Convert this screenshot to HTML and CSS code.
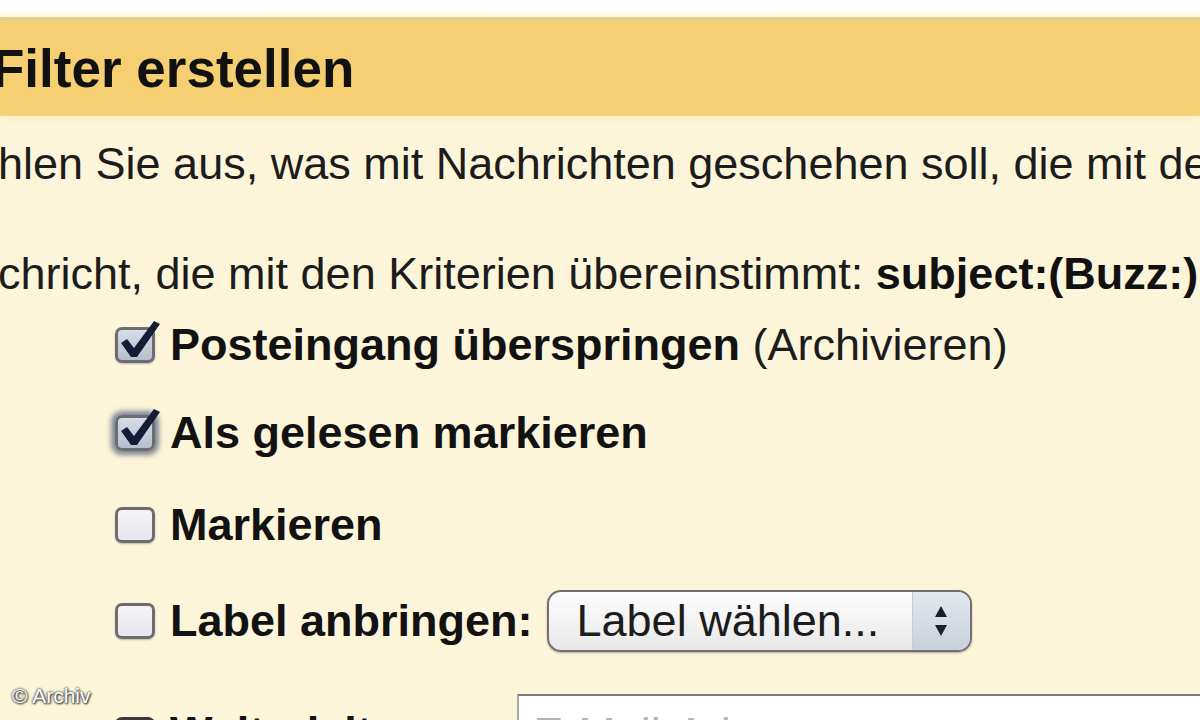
FILE: index.html
```html
<!DOCTYPE html>
<html lang="de">
<head>
<meta charset="utf-8">
<title>Filter erstellen</title>
<link rel="stylesheet" href="styles.css">
</head>
<body>
<div class="page">
  <div class="top-strip"></div>
  <div class="titlebar"><h1 class="title">Filter erstellen</h1></div>
  <div class="content">
    <p class="line line-1">hlen Sie aus, was mit Nachrichten geschehen soll, die mit den Kriterien übereinstimmen.</p>
    <p class="line line-2">chricht, die mit den Kriterien übereinstimmt: <b>subject:(Buzz:)</b></p>
    <div class="options">
      <div class="row">
        <span class="cb checked">
          <svg class="tick" viewBox="0 0 50 50" width="50" height="50"><path d="M6 24 L12 20 L19 29 L39 2 L45 5 L22 38 L16 38 Z" fill="#161b38"/></svg>
        </span>
        <span class="label"><b>Posteingang überspringen</b> (Archivieren)</span>
      </div>
      <div class="row">
        <span class="cb checked focus">
          <svg class="tick" viewBox="0 0 50 50" width="50" height="50"><path d="M6 24 L12 20 L19 29 L39 2 L45 5 L22 38 L16 38 Z" fill="#161b38"/></svg>
        </span>
        <span class="label"><b>Als gelesen markieren</b></span>
      </div>
      <div class="row row-3">
        <span class="cb"></span>
        <span class="label"><b>Markieren</b></span>
      </div>
      <div class="row row-4">
        <span class="cb"></span>
        <span class="label"><b>Label anbringen:</b></span>
        <div class="select">
          <span class="select-text">Label wählen...</span>
          <span class="select-arrows">
            <svg viewBox="0 0 14 34" width="14" height="34"><path d="M7 2 L13 13 L1 13 Z M1 21 L13 21 L7 32 Z" fill="#1c1f2a"/></svg>
          </span>
        </div>
      </div>
      <div class="row row-5">
        <span class="cb dark"></span>
        <span class="label"><b>Weiterleiten an:</b></span>
        <div class="input">E-Mail-Adresse</div>
      </div>
    </div>
  </div>
  <div class="watermark">© Archiv</div>
</div>
</body>
</html>
```
FILE: styles.css
```css
html, body {
  margin: 0;
  padding: 0;
}
body {
  width: 1200px;
  height: 720px;
  overflow: hidden;
  background: #fdf5d9;
  font-family: "Liberation Sans", Arial, sans-serif;
  color: #1b1b1b;
}
.page {
  position: relative;
  width: 1200px;
  height: 720px;
  overflow: hidden;
}
.top-strip {
  height: 17px;
  background: linear-gradient(#ffffff 0%, #ffffff 60%, #fdf6d6 100%);
}
.titlebar {
  height: 92px;
  border-top: 4px solid #e3d08e;
  border-bottom: 3px solid #efd37f;
  background: #f5cf71;
  box-shadow: 0 4px 6px rgba(253, 240, 190, 0.9);
}
.title {
  margin: 0 0 0 -8px;
  padding-top: 2px;
  font-size: 53px;
  line-height: 92px;
  font-weight: bold;
  color: #111;
  white-space: nowrap;
}
.content {
  padding-top: 22px;
}
.line {
  margin: 0;
  font-size: 45px;
  line-height: 52px;
  white-space: nowrap;
  color: #1c1c1c;
  margin-left: -2px;
}
.line-2 {
  margin-top: 58px;
}
.line-2 b {
  color: #111;
}
.options {
  display: flex;
  flex-direction: column;
  gap: 36px;
  margin-top: 19px;
  padding-left: 115px;
}
.row {
  display: flex;
  align-items: center;
  height: 52px;
  white-space: nowrap;
}
.row-3 {
  margin-top: 4px;
}
.row-4 {
  height: 62px;
  margin-top: 3px;
}
.row-5 {
  height: 62px;
  margin-top: 8px;
  align-items: flex-start;
}
.row-5 .cb {
  margin-top: 21px;
}
.row-5 .label {
  padding-top: 11px;
}
.label {
  font-size: 45px;
  line-height: 52px;
  color: #1c1c1c;
}
.label b {
  color: #121212;
}
.cb {
  position: relative;
  flex: none;
  box-sizing: border-box;
  width: 40px;
  height: 36px;
  margin-right: 15px;
  border: 3px solid #6d6d6f;
  border-radius: 7px;
  background: linear-gradient(#f4f4f8, #e6e7ee);
  box-shadow: 0 1px 2px rgba(0, 0, 0, 0.25);
}
.cb.checked {
  background: linear-gradient(#d6dce5, #b6c0cd);
}
.cb.focus {
  box-shadow: 0 0 5px 4px rgba(85, 100, 130, 0.75);
}
.cb.dark {
  background: #4a4a4a;
  border-color: #3a3a3a;
}
.tick {
  position: absolute;
  left: -3px;
  top: -11px;
  overflow: visible;
}
.select {
  box-sizing: border-box;
  display: flex;
  align-items: center;
  width: 425px;
  height: 62px;
  margin-left: 14px;
  border: 2px solid #707072;
  border-radius: 14px;
  background: linear-gradient(#fdfdfd, #f3f3f3 50%, #e8e8e8);
  box-shadow: 0 1px 2px rgba(0, 0, 0, 0.3);
  overflow: hidden;
}
.select-text {
  flex: 1;
  padding-left: 28px;
  font-size: 45px;
  line-height: 52px;
  color: #1c1c1c;
}
.select-arrows {
  display: flex;
  align-items: center;
  justify-content: center;
  width: 57px;
  height: 100%;
  border-left: 1px solid #c9ccd1;
  background: linear-gradient(#e4e8ee, #c8d0da);
}
.input {
  box-sizing: border-box;
  flex: none;
  width: 720px;
  height: 62px;
  margin-left: 13px;
  padding-left: 14px;
  border: 2px solid #a8a8a8;
  border-top-color: #7c7c7c;
  background: #fff;
  font-size: 45px;
  line-height: 60px;
  color: #b4b4b4;
  margin-top: -2px;
  padding-top: 8px;
}
.watermark {
  position: absolute;
  left: 12px;
  top: 684px;
  font-family: "Liberation Sans", Arial, sans-serif;
  font-size: 21px;
  color: #ffffff;
  text-shadow: 0 0 2px #444, 0 0 3px #555, 1px 1px 2px #333;
}
```
